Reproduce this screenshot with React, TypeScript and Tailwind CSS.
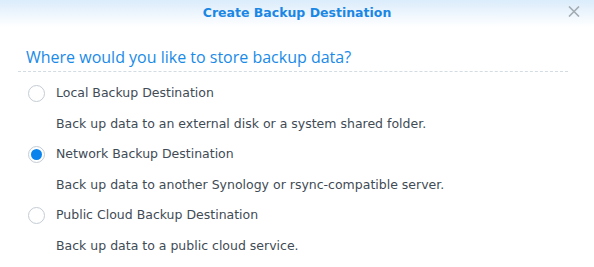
import { useState } from "react";

const options = [
  {
    id: "local",
    label: "Local Backup Destination",
    desc: "Back up data to an external disk or a system shared folder.",
  },
  {
    id: "network",
    label: "Network Backup Destination",
    desc: "Back up data to another Synology or rsync-compatible server.",
  },
  {
    id: "cloud",
    label: "Public Cloud Backup Destination",
    desc: "Back up data to a public cloud service.",
  },
];

export default function App() {
  const [selected, setSelected] = useState("network");

  return (
    <div className="w-[594px] h-[267px] bg-white overflow-hidden font-['DejaVu_Sans',Verdana,sans-serif]">
      <header className="relative h-[27px] bg-gradient-to-b from-[#dbecfb] to-white flex items-center justify-center">
        <h1 className="text-[12.5px] font-bold text-[#1b87e4] leading-none">Create Backup Destination</h1>
        <button className="absolute right-[14px] top-[6px] w-[12px] h-[11px] text-[#a3abb3]">
          <svg viewBox="0 0 12 11" className="w-full h-full" fill="none" stroke="currentColor" strokeWidth="1.6">
            <path d="M1 0.5 L11 10.5 M11 0.5 L1 10.5" />
          </svg>
        </button>
      </header>

      <div className="ml-[18px] w-[550px]">
        <div className="pt-[20px] pb-[3px] pl-2 border-b border-dashed border-[#d3dbe3]">
          <h2 className="text-[16px] leading-[21px] text-[#1a8ae8] font-['Open_Sans',sans-serif]">
            Where would you like to store backup data?
          </h2>
        </div>

        <div className="pt-[6px] pl-[10px] flex flex-col">
          {options.map((o) => (
            <div key={o.id} className="flex flex-col">
              <label
                className="flex items-center gap-[11px] h-[31px] cursor-pointer"
                onClick={() => setSelected(o.id)}
              >
                <span className="w-[17px] h-[17px] rounded-full border border-[#c4ccd4] bg-white flex items-center justify-center">
                  {selected === o.id && <span className="w-[11px] h-[11px] rounded-full bg-[#0b83ec]" />}
                </span>
                <span className="text-[12.5px] text-[#414b55]">{o.label}</span>
              </label>
              <p className="pl-[28px] h-[30px] flex items-center text-[12.5px] text-[#414b55]">{o.desc}</p>
            </div>
          ))}
        </div>
      </div>
    </div>
  );
}
